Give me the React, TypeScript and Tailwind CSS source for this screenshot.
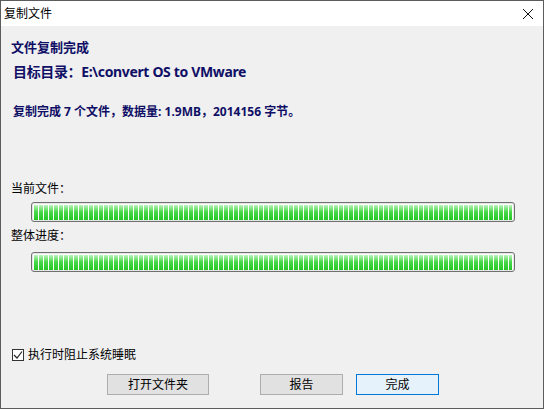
import React from "react"

const segs = Array.from({ length: 96 }, (_, i) => i)

// 经典样式的分段进度条
function ProgressBar() {
  return (
    <div className="ml-[20px] mr-[28px] h-[20px] rounded-[3px] border border-[#707070] bg-white pl-[2px] pr-[2px] pt-[2px] pb-[1px] shadow-[inset_0_0_0_1px_#e6e6e6]">
      <div className="h-full overflow-hidden">
        <div className="flex h-full gap-px">
          {segs.map((i) => (
            <div
              key={i}
              className="w-[4px] shrink-0 h-full bg-[linear-gradient(to_bottom,#bdf3bd,#4ad94a_45%,#24c724)]"
            />
          ))}
        </div>
      </div>
    </div>
  )
}

export default function App() {
  return (
    <div className="w-[544px] h-[409px] border border-[#5c5c5c] bg-[#f0f0f0] flex flex-col font-['Noto_Sans','Noto_Sans_CJK_SC',sans-serif] text-black overflow-hidden">
      {/* 标题栏 */}
      <div className="h-[25px] shrink-0 bg-white flex items-center justify-between pl-[3px] pr-[9px]">
        <span className="text-[12px] leading-none">复制文件</span>
        <svg width="12" height="12" viewBox="0 0 12 12" className="mt-[1px]">
          <path d="M1 1 L11 11 M11 1 L1 11" stroke="#111" strokeWidth="1" />
        </svg>
      </div>

      <div className="flex-1 flex flex-col pl-[10px]">
        <div className="mt-[13px] text-[13px] leading-[16px] font-bold text-[#0f0f66]">文件复制完成</div>
        <div className="mt-[8px] pl-[2px] text-[14px] leading-[18px] font-bold tracking-[-0.35px] text-[#0f0f66]">
          目标目录：E:\convert OS to VMware
        </div>
        <div className="mt-[23px] pl-[2px] text-[12px] leading-[16px] font-bold text-[#0f0f66]">
          复制完成 7 个文件，数据量: 1.9MB，2014156 字节。
        </div>

        <div className="mt-[61px] text-[12px] leading-[16px]">当前文件：</div>
        <div className="mt-[5px]">
          <ProgressBar />
        </div>
        <div className="mt-[6px] text-[12px] leading-[16px]">整体进度：</div>
        <div className="mt-[8px]">
          <ProgressBar />
        </div>

        <div className="mt-[75px] flex items-center pl-[1px] gap-[4px]">
          <div className="w-[12px] h-[12px] border border-[#333] bg-white flex items-center justify-center">
            <svg width="10" height="10" viewBox="0 0 10 10">
              <path d="M1 5 L4 8 L9 1.5" fill="none" stroke="#222" strokeWidth="1.2" />
            </svg>
          </div>
          <span className="text-[12px] leading-[16px]">执行时阻止系统睡眠</span>
        </div>

        <div className="mt-[11px] flex text-[12px]">
          <button className="ml-[96px] w-[102px] h-[21px] border border-[#adadad] bg-[#e1e1e1] leading-none">
            打开文件夹
          </button>
          <button className="ml-[51px] w-[83px] h-[21px] border border-[#adadad] bg-[#e1e1e1] leading-none">
            报告
          </button>
          <button className="ml-[13px] w-[83px] h-[21px] border border-[#0078d7] bg-[#e5f1fb] leading-none">
            完成
          </button>
        </div>
      </div>
    </div>
  )
}
